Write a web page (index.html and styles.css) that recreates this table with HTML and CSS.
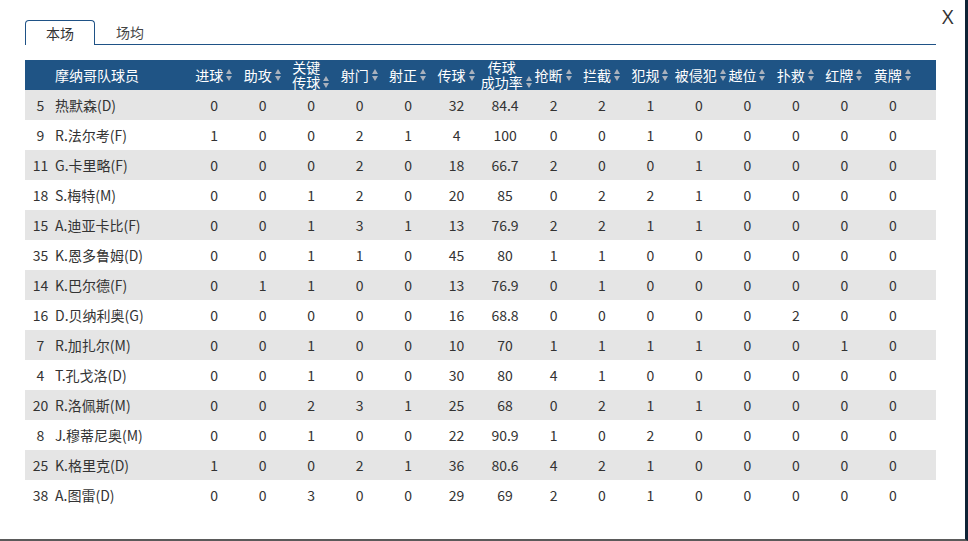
FILE: index.html
```html
<!DOCTYPE html>
<html>
<head>
<meta charset="utf-8">
<link rel="stylesheet" href="styles.css">
</head>
<body>
<div class="frame">
  <div class="close">X</div>
  <div class="tabs">
    <div class="tab active">本场</div>
    <div class="tab">场均</div>
  </div>
  <div class="table" id="table">
    <div class="row head">
      <div class="c num"></div>
      <div class="c name">摩纳哥队球员</div>
      <div class="c"><span class="h">进球</span><i class="sort"></i></div>
      <div class="c"><span class="h">助攻</span><i class="sort"></i></div>
      <div class="c"><span class="h two">关键<br>传球</span><i class="sort low"></i></div>
      <div class="c"><span class="h">射门</span><i class="sort"></i></div>
      <div class="c"><span class="h">射正</span><i class="sort"></i></div>
      <div class="c"><span class="h">传球</span><i class="sort"></i></div>
      <div class="c"><span class="h two">传球<br>成功率</span><i class="sort low"></i></div>
      <div class="c"><span class="h">抢断</span><i class="sort"></i></div>
      <div class="c"><span class="h">拦截</span><i class="sort"></i></div>
      <div class="c"><span class="h">犯规</span><i class="sort"></i></div>
      <div class="c"><span class="h">被侵犯</span><i class="sort"></i></div>
      <div class="c"><span class="h">越位</span><i class="sort"></i></div>
      <div class="c"><span class="h">扑救</span><i class="sort"></i></div>
      <div class="c"><span class="h">红牌</span><i class="sort"></i></div>
      <div class="c"><span class="h">黄牌</span><i class="sort"></i></div>
      <div class="c"></div>
    </div>
  </div>
</div>
<script src="script.js"></script>
</body>
</html>
```
FILE: script.js
```js
var rows = [
["5","热默森(D)","0 0 0 0 0 32 84.4 2 2 1 0 0 0 0 0"],
["9","R.法尔考(F)","1 0 0 2 1 4 100 0 0 1 0 0 0 0 0"],
["11","G.卡里略(F)","0 0 0 2 0 18 66.7 2 0 0 1 0 0 0 0"],
["18","S.梅特(M)","0 0 1 2 0 20 85 0 2 2 1 0 0 0 0"],
["15","A.迪亚卡比(F)","0 0 1 3 1 13 76.9 2 2 1 1 0 0 0 0"],
["35","K.恩多鲁姆(D)","0 0 1 1 0 45 80 1 1 0 0 0 0 0 0"],
["14","K.巴尔德(F)","0 1 1 0 0 13 76.9 0 1 0 0 0 0 0 0"],
["16","D.贝纳利奥(G)","0 0 0 0 0 16 68.8 0 0 0 0 0 2 0 0"],
["7","R.加扎尔(M)","0 0 1 0 0 10 70 1 1 1 1 0 0 1 0"],
["4","T.孔戈洛(D)","0 0 1 0 0 30 80 4 1 0 0 0 0 0 0"],
["20","R.洛佩斯(M)","0 0 2 3 1 25 68 0 2 1 1 0 0 0 0"],
["8","J.穆蒂尼奥(M)","0 0 1 0 0 22 90.9 1 0 2 0 0 0 0 0"],
["25","K.格里克(D)","1 0 0 2 1 36 80.6 4 2 1 0 0 0 0 0"],
["38","A.图雷(D)","0 0 3 0 0 29 69 2 0 1 0 0 0 0 0"]
];
var t = document.getElementById("table");
rows.forEach(function (r, i) {
  var row = document.createElement("div");
  row.className = "row" + (i % 2 === 0 ? " odd" : "");
  var html = '<div class="c num">' + r[0] + '</div><div class="c name">' + r[1] + '</div>';
  r[2].split(" ").forEach(function (v) { html += '<div class="c">' + v + '</div>'; });
  html += '<div class="c"></div>';
  row.innerHTML = html;
  t.appendChild(row);
});
```
FILE: styles.css
```css
html, body { margin: 0; padding: 0; background: #fff; }
body {
  font-family: "Noto Sans CJK SC", "Noto Sans", sans-serif;
  font-size: 14px;
  color: #333;
}
.frame {
  position: relative;
  width: 968px;
  height: 541px;
  border-right: 3px solid #0f2235;
  border-bottom: 2px solid #5a5a5a;
  padding: 20px 32px 0 25px;
  box-sizing: border-box;
  overflow: hidden;
}
.close {
  position: absolute;
  top: 5px;
  left: 942px;
  font-family: "Open Sans", "Liberation Sans", sans-serif;
  font-size: 20px;
  line-height: 24px;
  color: #333;
}
.tabs {
  display: flex;
  height: 24px;
  border-bottom: 1px solid #1f5286;
  width: 911px;
}
.tab {
  width: 70px;
  height: 24px;
  box-sizing: border-box;
  text-align: center;
  line-height: 24px;
  color: #444;
}
.tab.active {
  border: 1px solid #1f5286;
  border-bottom: none;
  border-radius: 4px 4px 0 0;
  background: #fff;
  height: 25px;
  line-height: 24px;
  margin-bottom: -1px;
  color: #333;
}
.table { margin-top: 15px; width: 911px; }
.row {
  display: grid;
  grid-template-columns: 30px 135px repeat(15, 48.47px) 1fr;
  height: 30px;
  align-items: center;
}
.row.odd { background: #e5e5e5; }
.row.head {
  background: #1f5485;
  color: #fff;
}
.c {
  text-align: center;
  line-height: 20px;
  white-space: nowrap;
}
.num { text-align: center; padding-left: 1px; }
.name { text-align: left; }
.head .c {
  display: flex;
  justify-content: center;
  align-items: center;
}
.head .name { justify-content: flex-start; }
.h { display: block; line-height: 20px; }
.h.two { line-height: 15px; }
.sort {
  display: inline-block;
  width: 7px;
  height: 12px;
  margin-left: 3px;
  position: relative;
}
.sort.low { align-self: flex-end; margin-bottom: 2px; }
.sort::before, .sort::after {
  content: "";
  position: absolute;
  left: 0;
  border-left: 3.5px solid transparent;
  border-right: 3.5px solid transparent;
}
.sort::before { top: 0; border-bottom: 5px solid #a9b1bd; }
.sort::after { bottom: 0; border-top: 5px solid #a9b1bd; }
```
